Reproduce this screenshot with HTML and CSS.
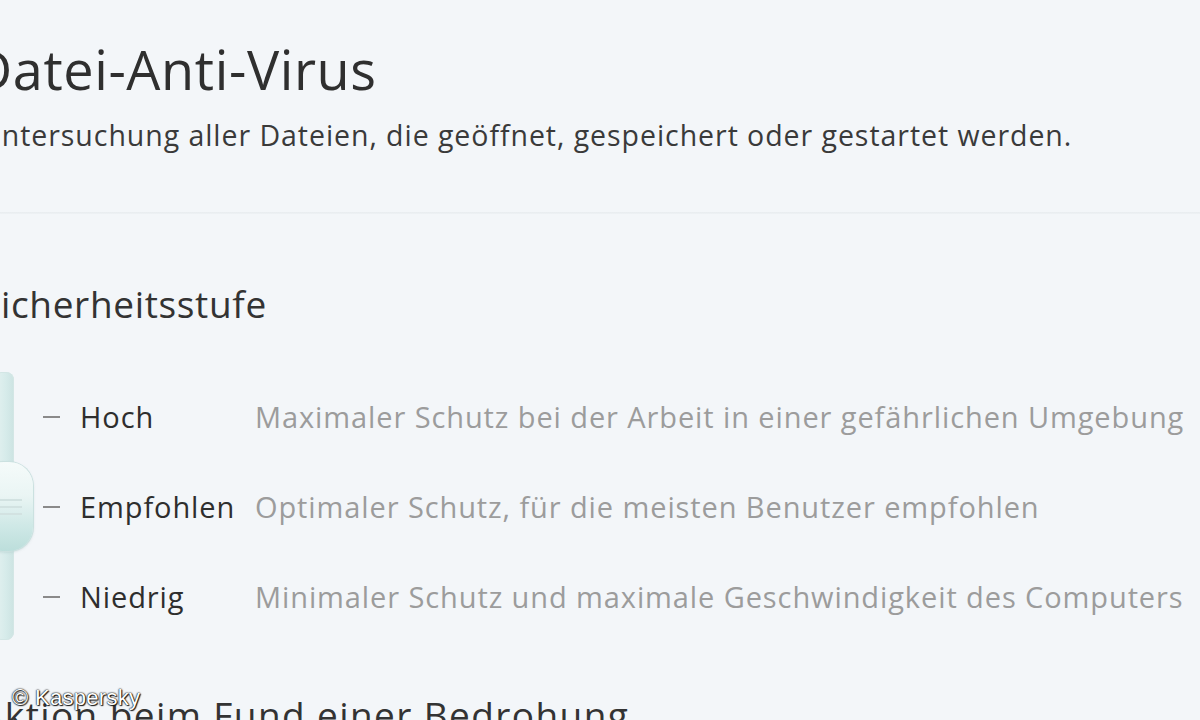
FILE: index.html
```html
<!DOCTYPE html>
<html lang="de">
<head>
<meta charset="utf-8">
<title>Datei-Anti-Virus</title>
<link rel="stylesheet" href="styles.css">
</head>
<body>
<main class="page">
  <h1 class="title">Datei-Anti-Virus</h1>
  <p class="subtitle">Untersuchung aller Dateien, die geöffnet, gespeichert oder gestartet werden.</p>
  <hr class="divider">
  <h2 class="section-title">Sicherheitsstufe</h2>
  <div class="level">
    <div class="slider">
      <div class="track"></div>
      <div class="thumb"><span class="grip"></span><span class="grip"></span><span class="grip"></span></div>
    </div>
    <ul class="options">
      <li class="option"><span class="tick"></span><span class="label">Hoch</span><span class="desc">Maximaler Schutz bei der Arbeit in einer gefährlichen Umgebung</span></li>
      <li class="option"><span class="tick"></span><span class="label">Empfohlen</span><span class="desc">Optimaler Schutz, für die meisten Benutzer empfohlen</span></li>
      <li class="option"><span class="tick"></span><span class="label">Niedrig</span><span class="desc">Minimaler Schutz und maximale Geschwindigkeit des Computers</span></li>
    </ul>
  </div>
  <h2 class="section-title bottom">Aktion beim Fund einer Bedrohung</h2>
</main>
<div class="watermark">© Kaspersky</div>
</body>
</html>
```
FILE: styles.css
```css
html, body {
  margin: 0;
  padding: 0;
  background: #f3f6f9;
  overflow: hidden;
  height: 720px;
}
body {
  font-family: "Open Sans", "Noto Sans", sans-serif;
  color: #333;
}
.page {
  margin-left: -20px;
  padding-top: 37px;
}
.title {
  margin: 0 0 0 -7px;
  font-size: 54px;
  line-height: 64px;
  font-weight: 400;
  color: #2f2f2f;
  letter-spacing: 0.6px;
}
.subtitle {
  margin: 16px 0 0 0;
  font-size: 28.5px;
  line-height: 36px;
  color: #3a3a3a;
  letter-spacing: 0.95px;
  white-space: nowrap;
}
.divider {
  margin: 59px 0 0 0;
  border: 0;
  height: 2px;
  background: linear-gradient(to bottom, #e8ecef, #eef2f5);
  width: 1240px;
}
.section-title {
  margin: 66px 0 0 0;
  font-size: 37px;
  line-height: 48px;
  font-weight: 400;
  color: #333;
  letter-spacing: 0.66px;
  white-space: nowrap;
}
.section-title.bottom {
  margin-top: 49px;
  letter-spacing: 1.4px;
}
.level {
  display: flex;
  margin-top: 44px;
  height: 270px;
}
.slider {
  position: relative;
  width: 63px;
  height: 268px;
  flex: none;
}
.track {
  margin-left: 14px;
  width: 20px;
  height: 268px;
  border-radius: 8px;
  background: linear-gradient(to right, #e6f2f1, #d6ebea 60%, #cce3e2);
  box-shadow: inset 0 0 0 1px #d3e6e5;
}
.thumb {
  position: absolute;
  left: 0;
  top: 90px;
  width: 53px;
  height: 89px;
  border-radius: 24px;
  background: linear-gradient(to bottom, #f5fbfa 0%, #eaf5f4 38%, #d0e9e7 70%, #bcdedb 100%);
  box-shadow: 0 0 0 1px #cbe1e0, 0 1px 3px rgba(120,160,160,0.35);
  display: flex;
  flex-direction: column;
  justify-content: center;
  gap: 5px;
  padding-left: 14px;
  box-sizing: border-box;
}
.grip {
  display: block;
  width: 28px;
  height: 2px;
  background: #d2e2e1;
}
.options {
  list-style: none;
  margin: 0;
  padding: 0;
}
.option {
  display: flex;
  align-items: center;
  height: 90px;
  line-height: 90px;
  font-size: 29px;
}
.tick {
  display: block;
  width: 17px;
  height: 2px;
  background: #8a8a8a;
  margin-right: 20px;
  flex: none;
}
.label {
  width: 175px;
  flex: none;
  color: #2e2e2e;
  letter-spacing: 0.9px;
}
.desc {
  color: #9c9c9c;
  white-space: nowrap;
  letter-spacing: 0.9px;
}
.watermark {
  position: absolute;
  left: 12px;
  top: 685px;
  font-family: "Liberation Sans", Arial, sans-serif;
  font-size: 22px;
  line-height: 26px;
  letter-spacing: 0.3px;
  color: #ffffff;
  text-shadow: 0 0 2px #000, 0 0 1px #000, 1px 1px 1px #222;
}
```
